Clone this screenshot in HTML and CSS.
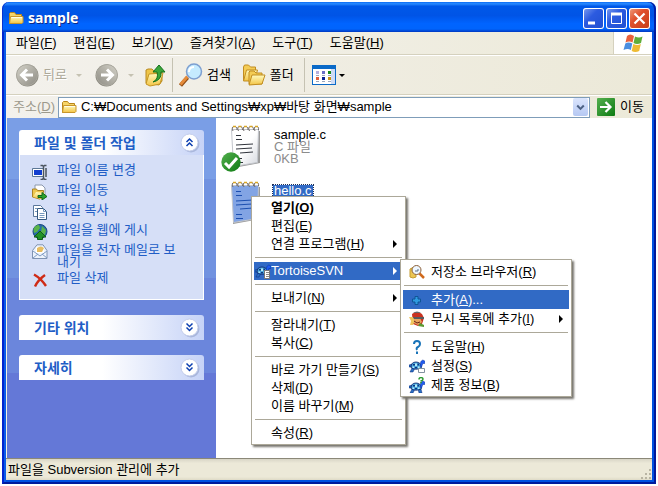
FILE: index.html
```html
<!DOCTYPE html>
<html lang="ko">
<head>
    <title>sample</title>
    <meta charset="UTF-8">
    <meta name="viewport" content="width=device-width, initial-scale=1.0">
    <link rel="stylesheet" href="styles.css">
</head>
<body>

<!-- Shared icon shapes -->
<svg class="sprite" aria-hidden="true">
    <defs>
        <linearGradient id="gFolder" x1="0" y1="0" x2="0" y2="1"><stop offset="0" stop-color="#fffbc0"/><stop offset="1" stop-color="#f3c443"/></linearGradient>
        <linearGradient id="gGray" x1="0" y1="0" x2="1" y2="1"><stop offset="0" stop-color="#d4d2c8"/><stop offset="1" stop-color="#8e8c84"/></linearGradient>
        <linearGradient id="gGreen" x1="0" y1="0" x2="1" y2="1"><stop offset="0" stop-color="#55b04f"/><stop offset="1" stop-color="#0d7a12"/></linearGradient>
        <linearGradient id="gPaper" x1="0" y1="0" x2="1" y2="1"><stop offset="0.5" stop-color="#ffffff"/><stop offset="1" stop-color="#d4d7de"/></linearGradient>
    </defs>
    <symbol id="folder" viewBox="0 0 16 16">
        <path d="M1.5 13.5V3.500l1-1h4l1.500 2h5.500v9z" fill="#f7d567" stroke="#b9861c"/>
        <path d="M1.500 13.500l1-7h12.500v6l-1 1z" fill="url(#gFolder)" stroke="#c8962a"/>
        <path d="M3.500 7.500h10.500" stroke="#fffde8"/>
    </symbol>
    <symbol id="round" viewBox="0 0 24 24">
        <circle cx="12.500" cy="12.500" r="11" fill="#8a887f"/>
        <circle cx="12" cy="12" r="10.500" fill="url(#gGray)" stroke="#aaa89e"/>
        <path d="M18 12H8M12 6.500L6.500 12l5.500 5.500" fill="none" stroke="#fff" stroke-width="3"/>
    </symbol>
    <symbol id="chevron" viewBox="0 0 20 20">
        <path d="M6.500 5.500l3 3 3-3M6.500 9.500l3 3 3-3" fill="none" stroke="#0c3fb0" stroke-width="1.500"/>
    </symbol>
    <symbol id="disc" viewBox="0 0 20 20">
        <circle cx="11" cy="11" r="8.500" fill="#a9b7dc"/>
        <circle cx="9.500" cy="9.500" r="8.500" fill="#fff" stroke="#c3cdeb"/>
    </symbol>
    <symbol id="turtle" viewBox="0 0 16 16">
        <path d="M0 7l3-1v3H0zM1 14l2-4h3l-2 4H1zM9 10h3l1 4h-3z" fill="#2a6fc4" stroke="#0b2a7a" stroke-width=".5"/>
        <path d="M2 9.500Q2 4 7 4t5.500 5.500Q7 13 2 9.500z" fill="#4aa6dc" stroke="#0a1f66" stroke-width=".8"/>
        <path d="M4 6h2v1.500H4zM8.500 5.500h1.500v2H8.500zM6 9h2v1.500H6z" fill="#0c3580"/>
        <path d="M6 5.500h2V8H6zM9 8.500h1.500V10H9zM3.500 8.500H5v1.500H3.500z" fill="#b4ecf8"/>
        <path d="M11 8l.8-4.500 2-1.500 2 1v2.500h-2L12.500 9z" fill="#1f5cf0" stroke="#0a2c9c" stroke-width=".5"/>
    </symbol>
    <symbol id="notepad" viewBox="0 0 32 46">
        <path d="M3 7h27v32l-5 1-22 4z" fill="#9a9a9a"/>
        <path class="sheet" d="M1.500 5.500h27l-1 33-24 4z" stroke="#c3c6cc"/>
        <path d="M3 7Q1 3 4 2.500t3 3.500M8.500 7q-2-4 1-4.500t3 3.500M14 7q-2-4 1-4.500t3 3.500M19.500 7q-2-4 1-4.500t3 3.500M25 7q-2-4 1-4.500t2.500 3.500" fill="none" stroke="#6f6a68"/>
        <path d="M3 2.500h3M8.500 2.500h3M14 2.500h3M19.500 2.500h3M25 2.500h3" stroke="#d9a625" stroke-width="1.500"/>
        <path class="lines" d="M6 11.500h5M6 15.500h6M6 21l17-1M6 25l16-1M10 29l13-1M6 34.500h6M6 38.500h7"/>
    </symbol>
</svg>

<div class="window">
    <header class="titlebar">
        <svg class="icon16"><use href="#folder"/></svg>
        <h1>sample</h1>
        <div class="caption-buttons">
            <button aria-label="최소화"><svg viewBox="0 0 21 21"><path d="M5 15h7" stroke="#fff" stroke-width="3"/></svg></button>
            <button aria-label="최대화"><svg viewBox="0 0 21 21"><path d="M5 5.500h11M5.500 5v10.500h10V5" fill="none" stroke="#fff"/><path d="M5 6h11" stroke="#fff" stroke-width="3"/></svg></button>
            <button class="close" aria-label="닫기"><svg viewBox="0 0 21 21"><path d="M5.500 5.500l10 10M15.500 5.500l-10 10" stroke="#fff" stroke-width="2.200"/></svg></button>
        </div>
    </header>

    <div class="frame">
        <nav class="menubar">
            <button>파일(<u>F</u>)</button>
            <button>편집(<u>E</u>)</button>
            <button>보기(<u>V</u>)</button>
            <button>즐겨찾기(<u>A</u>)</button>
            <button>도구(<u>T</u>)</button>
            <button>도움말(<u>H</u>)</button>
            <div class="flag">
                <svg viewBox="0 0 20 19">
                    <path d="M4 2q3-3 7 0L9.500 8.500q-3-2-7 0z" fill="#e8603c"/>
                    <path d="M12 2.500q4 2 7.500 0L18 9q-4 2-7.500 0z" fill="#5fae3a"/>
                    <path d="M2.300 9.500q3-2 7 0L7.800 16q-3-2-7.300 0z" fill="#4a8ee0"/>
                    <path d="M10.300 10q4 2 7.500 0l-1.600 7q-4 2-7.500 0z" fill="#eebb33"/>
                </svg>
            </div>
        </nav>

        <div class="toolbar">
            <button class="disabled" disabled><svg class="icon24"><use href="#round"/></svg>뒤로</button>
            <span class="caret pale"></span>
            <button class="disabled forward" disabled aria-label="앞으로"><svg class="icon24 flip"><use href="#round"/></svg></button>
            <span class="caret pale"></span>
            <button class="up" aria-label="위로">
                <svg class="icon24" viewBox="0 0 24 24">
                    <path d="M2 20V7l2-1h4l2 2h8v10l-3 4z" fill="#eec548" stroke="#b88a20"/>
                    <path d="M2 21l3-10 14-1-3 11-10 2z" fill="url(#gFolder)" stroke="#c59524"/>
                    <path d="M9 19q6-3 4-10H9l6-7 6 7h-4q1 8-8 10z" fill="#3aa63a" stroke="#14701c"/>
                </svg>
            </button>
            <span class="divider"></span>
            <button class="search">
                <svg class="icon24" viewBox="0 0 24 24">
                    <path d="M1.500 22.500l7-8" stroke="#8d4a12" stroke-width="4"/>
                    <path d="M1.500 21.500l7-8" stroke="#e58b3a" stroke-width="3"/>
                    <circle cx="15" cy="8.500" r="7.500" fill="#c5ebff" stroke="#7d9fd0" stroke-width="1.500"/>
                    <path d="M10 9q0-5 5-5" fill="none" stroke="#fff" stroke-width="2"/>
                </svg>검색
            </button>
            <button class="folders">
                <svg class="icon24" viewBox="0 0 24 24">
                    <path d="M1.500 17V4l1-2h4l2 2h5v4l-4 10z" fill="#f4cc55" stroke="#c18d21"/>
                    <path d="M1.500 18l3-11h11l-3 11z" fill="url(#gFolder)" stroke="#c18d21"/>
                    <path d="M7 21V9l1-1h4l2 2h6v11z" fill="#f4cc55" stroke="#c18d21"/>
                    <path d="M7 22l3-10h13l-3 9z" fill="url(#gFolder)" stroke="#c18d21"/>
                </svg>폴더
            </button>
            <span class="divider"></span>
            <button class="views" aria-label="보기">
                <svg viewBox="0 0 24 20">
                    <path d="M0 0h24v20H0z" fill="#0a6ac8"/><path d="M1 4h22v15H1z" fill="#fff"/>
                    <path d="M19 4h4v15h-4z" fill="#cfdcf5"/>
                    <path d="M4 6h3v3H4z" fill="#b5b0dd"/><path d="M10 6h3v3h-3z" fill="#6a6fc8"/><path d="M16 6h3v3h-3z" fill="#178a22"/>
                    <path d="M4 12h3v3H4z" fill="#e0603c"/><path d="M10 12h3v3h-3z" fill="#0a2494"/><path d="M16 12h3v3h-3z" fill="#c98f17"/>
                    <path d="M4 10.500h3M10 10.500h3M16 10.500h3M4 16.500h3M10 16.500h3M16 16.500h3" stroke="#9aa6bb"/>
                </svg>
            </button>
            <span class="caret"></span>
        </div>

        <form class="addressbar">
            <label for="address">주소(<u>D</u>)</label>
            <div class="combo">
                <svg class="icon16"><use href="#folder"/></svg>
                <input type="text" id="address" value="C:₩Documents and Settings₩xp₩바탕 화면₩sample">
                <button type="button" aria-label="목록"><svg viewBox="0 0 16 18"><path d="M4.500 7.500L8 11l3.500-3.500" fill="none" stroke="#4d6185" stroke-width="2.200"/></svg></button>
            </div>
            <button type="button" class="go">
                <svg viewBox="0 0 18 18"><rect width="18" height="18" rx="1" fill="url(#gGreen)"/><path d="M3 9h10M8.500 4L13.500 9l-5 5" fill="none" stroke="#fff" stroke-width="2.200"/></svg>이동
            </button>
        </form>

        <div class="content">
            <aside class="sidebar">
                <section class="panel">
                    <h2>파일 및 폴더 작업 <button aria-label="접기"><svg viewBox="0 0 20 20"><use href="#disc"/><path d="M6.500 9l3-3 3 3M6.500 13l3-3 3 3" fill="none" stroke="#0c3fb0" stroke-width="1.500"/></svg></button></h2>
                    <ul class="tasks">
                        <li>
                            <svg viewBox="0 0 16 16"><path d="M.5 4.500h11v8H.5z" fill="#fff" stroke="#5c7896"/><path d="M2 6h8v5H2z" fill="#123fd0"/><path d="M8.500 1.500h2l1 1 1-1h2M11.500 3v11M8.500 15.500h2l1-1.500 1 1.500h2M14 4v9" fill="none" stroke="#4b545e" stroke-width="1.500"/><path d="M12.500 4v9" stroke="#c2c8ce"/></svg>
                            <a href="#">파일 이름 변경</a>
                        </li>
                        <li>
                            <svg viewBox="0 0 16 16"><path d="M3 1h7l3 3v7H3z" fill="#fff" stroke="#8c98ac"/><path d="M.5 13V5h4l1 1.500h6V13l-4 2z" fill="#edc74e" stroke="#a98322"/><path d="M1 13l3-5 9 1-3 6z" fill="url(#gFolder)"/><path d="M6 11.500h4V8.500l5 4-5 3.500v-2.500H6z" fill="#2da32d" stroke="#10661a"/></svg>
                            <a href="#">파일 이동</a>
                        </li>
                        <li>
                            <svg viewBox="0 0 16 16"><path d="M1.500 1.500h7l2 2v9h-9z" fill="#fff" stroke="#5b779b"/><path d="M5.500 4.500h6l3 3v8h-9z" fill="#fff" stroke="#35587f"/><path d="M11.500 4.500v3h3M7.500 9.500h5M7.500 11.500h5M7.500 13.500h5M3 4.500h2M3 7.500h2" fill="none" stroke="#7799bd"/></svg>
                            <a href="#">파일 복사</a>
                        </li>
                        <li>
                            <svg viewBox="0 0 16 16"><circle cx="8" cy="7.500" r="7" fill="#276ca9" stroke="#1b477f"/><path d="M1.500 5Q3 1 7 1l1 3-3 4-3 1zM10 2l4 4-1 5-4-3z" fill="#5ab449"/><path d="M2 13l6-6 6 6h-3.500v2.500h-5V13z" fill="#229226" stroke="#0e5c18"/></svg>
                            <a href="#">파일을 웹에 게시</a>
                        </li>
                        <li>
                            <svg viewBox="0 0 16 16"><path d="M.5 6.500L5 .8h6l4 5.700v8H.5z" fill="#edf3fc" stroke="#7f93b2"/><path d="M4 3h8v6H4z" fill="#fff"/><path d="M5 4q4-3 7 0l-2 4H5z" fill="#e7bd62"/><path d="M1 7l7 5 7-5M1 14l5-4M15 14l-5-4" fill="none" stroke="#7f9bc2"/></svg>
                            <a href="#">파일을 전자 메일로 보내기</a>
                        </li>
                        <li>
                            <svg viewBox="0 0 16 16"><path d="M2 2.500q7 4 12 11.500M13 3Q6 8 3 14.500" fill="none" stroke="#cf2b16" stroke-width="2.400"/></svg>
                            <a href="#">파일 삭제</a>
                        </li>
                    </ul>
                </section>
                <section class="panel">
                    <h2>기타 위치 <button aria-label="펼치기"><svg viewBox="0 0 20 20"><use href="#disc"/><use href="#chevron"/></svg></button></h2>
                </section>
                <section class="panel">
                    <h2>자세히 <button aria-label="펼치기"><svg viewBox="0 0 20 20"><use href="#disc"/><use href="#chevron"/></svg></button></h2>
                </section>
            </aside>

            <main class="files">
                <div class="file">
                    <div class="file-icon">
                        <svg class="page"><use href="#notepad"/></svg>
                        <svg class="overlay" viewBox="0 0 20 20"><circle cx="10" cy="10" r="9.700" fill="url(#gGreen)"/><path d="M4 11l4 4 8-9" fill="none" stroke="#fff" stroke-width="3"/></svg>
                    </div>
                    <div class="file-text">
                        <span class="name">sample.c</span>
                        <span>C 파일</span>
                        <span>0KB</span>
                    </div>
                </div>

                <div class="file selected">
                    <div class="file-icon"><svg class="page"><use href="#notepad"/></svg></div>
                    <div class="file-text">
                        <span class="name">hello.c</span>
                    </div>

                    <ul class="menu context" role="menu">
                        <li><button class="default">열기(<u>O</u>)</button></li>
                        <li><button>편집(<u>E</u>)</button></li>
                        <li><button class="more">연결 프로그램(<u>H</u>)</button></li>
                        <li class="line"></li>
                        <li class="active">
                            <button class="more">
                                <svg viewBox="0 0 16 16"><use href="#turtle"/><path d="M9.500 7.500h5v8h-5z" fill="#fff" stroke="#777"/><path d="M11 9.500h3M11 11.500h3M11 13.500h3" stroke="#888"/></svg>TortoiseSVN
                            </button>
                            <ul class="menu sub" role="menu">
                                <li><button>
                                    <svg viewBox="0 0 16 16"><path d="M1 5q3-3 6 0v8q-3 2-6 0z" fill="#ecc653" stroke="#c59c32"/><path d="M10 9l5 5" stroke="#d06a1d" stroke-width="2.500"/><circle cx="7.500" cy="6" r="4.500" fill="#eef7ff" stroke="#8b5e37"/><path d="M6 7h3V5" fill="none" stroke="#5c7187"/></svg>저장소 브라우저(<u>R</u>)
                                </button></li>
                                <li class="line"></li>
                                <li class="active"><button>
                                    <svg viewBox="0 0 16 16"><path d="M6 4.500h3V7h2.500v3H9v2.500H6V10H3.500V7H6z" fill="#2f9ae0" stroke="#0e5596"/></svg>추가(<u>A</u>)...
                                </button></li>
                                <li><button class="more">
                                    <svg viewBox="0 0 16 16"><path d="M3 3q5-4 10 0l2 4-2 6-4 2-5-2z" fill="#c93220"/><path d="M0 6h4l2 3-2 5H1l1-4z" fill="#efc65e"/><path d="M5 8l6-1 2 4-4 3-4-2z" fill="#e9a35d"/><path d="M4 2q4-3 8 0z" fill="#62686c"/><path d="M4 6h11v2H5z" fill="#555c60"/><path d="M5 10l3 2 3-1" stroke="#672218" fill="none"/><path d="M9 15l2-3 4 2v2z" fill="#5b9930"/></svg>무시 목록에 추가(<u>I</u>)
                                </button></li>
                                <li class="line"></li>
                                <li><button>
                                    <svg viewBox="0 0 16 16"><path d="M5 5q0-3 3-3t3 3q0 2-2 3t-1 3M8 12.500v2.500" fill="none" stroke="#1873b8" stroke-width="2"/></svg>도움말(<u>H</u>)
                                </button></li>
                                <li><button>
                                    <svg viewBox="0 0 16 16"><use href="#turtle"/><path d="M9.500 10.500h6v4h-6z" fill="#fff" stroke="#8291a0"/></svg>설정(<u>S</u>)
                                </button></li>
                                <li><button>
                                    <svg viewBox="0 0 16 16"><use href="#turtle" y="2"/><path d="M10 2.500Q10 .6 12 .6t2 1.400-2 2v.5M12 5v1.200" fill="none" stroke="#2c9b30" stroke-width="1.500"/></svg>제품 정보(<u>B</u>)
                                </button></li>
                            </ul>
                        </li>
                        <li class="line"></li>
                        <li><button class="more">보내기(<u>N</u>)</button></li>
                        <li class="line"></li>
                        <li><button>잘라내기(<u>T</u>)</button></li>
                        <li><button>복사(<u>C</u>)</button></li>
                        <li class="line"></li>
                        <li><button>바로 가기 만들기(<u>S</u>)</button></li>
                        <li><button>삭제(<u>D</u>)</button></li>
                        <li><button>이름 바꾸기(<u>M</u>)</button></li>
                        <li class="line"></li>
                        <li><button>속성(<u>R</u>)</button></li>
                    </ul>
                </div>
            </main>
        </div>

        <footer class="statusbar">
            <span>파일을 Subversion 관리에 추가</span>
            <svg viewBox="0 0 12 12"><path d="M9 1h2v2H9zM5 5h2v2H5zM9 5h2v2H9zM1 9h2v2H1zM5 9h2v2H5zM9 9h2v2H9z" fill="#b8b4a3"/></svg>
        </footer>
    </div>
</div>

</body>
</html>
```
FILE: styles.css
```css
/* Global styles */
* {
    box-sizing: border-box;
}

body {
    background-color: #ffffff;
    color: #000000;
    font-family: "Liberation Sans", "Noto Sans CJK KR", sans-serif;
    font-size: 13px;
    line-height: 18px;
    margin: 0;
    padding: 2px;
}

button {
    display: flex;
    align-items: center;
    background: none;
    border: 0;
    padding: 0;
    color: inherit;
    font: inherit;
    white-space: nowrap;
}

svg {
    display: block;
    flex: none;
}

ul {
    list-style: none;
    margin: 0;
    padding: 0;
}

u {
    text-underline-offset: 1px;
}

.sprite {
    position: absolute;
    width: 0;
    height: 0;
}

.icon16 {
    width: 16px;
    height: 16px;
}

.icon24 {
    width: 24px;
    height: 24px;
}

.flip {
    transform: scaleX(-1);
}

/* Window */
.window {
    display: flex;
    flex-direction: column;
    min-height: calc(100vh - 4px);
}

.titlebar {
    display: flex;
    align-items: center;
    gap: 4px;
    height: 30px;
    padding: 2px 6px 0;
    border-radius: 7px 7px 0 0;
    background: linear-gradient(#0a6cf5, #2a8bff 6%, #0058e8 14%, #0054e6 45%, #0064ff 72%, #0064fc 90%, #0038c0);
    box-shadow: inset 1px 0 #0a32d0, inset -2px 0 #0020a8;
}

.titlebar h1 {
    flex: 1;
    margin: 0;
    color: #ffffff;
    font-family: "Noto Sans", sans-serif;
    font-size: 14px;
    line-height: 20px;
    text-shadow: 1px 1px #0a2a88;
}

.caption-buttons {
    display: flex;
    gap: 2px;
}

.caption-buttons button {
    width: 21px;
    height: 21px;
    border-radius: 3px;
    background: linear-gradient(135deg, #7f9ff0, #2c5be0 40%, #1f4fd0);
    box-shadow: inset 0 0 0 1px #ffffff;
}

.caption-buttons .close {
    background: linear-gradient(135deg, #f0a080, #e0502c 40%, #c43c16);
}

.caption-buttons svg {
    width: 21px;
    height: 21px;
}

.frame {
    display: flex;
    flex: 1;
    flex-direction: column;
    border: 2px solid #001a9c;
    border-top: 0;
    border-left-color: #0024cf;
    background-color: #ece9d8;
    box-shadow: inset 2px 0 #0a5ce8, inset -2px -2px #0050e0;
    padding: 0 2px 2px;
}

/* Menu bar, toolbar and address bar */
.menubar {
    display: flex;
    gap: 1px;
    height: 23px;
    padding-left: 2px;
    background: linear-gradient(to right, #f5f4f0, #ece9d8);
    border-bottom: 1px solid #d5d1be;
}

.menubar button {
    padding: 0 8px;
}

.flag {
    display: flex;
    align-items: center;
    justify-content: center;
    width: 39px;
    margin-left: auto;
    border-left: 1px solid #d5d1be;
    background-color: #ffffff;
}

.flag svg {
    width: 20px;
    height: 19px;
}

.toolbar {
    display: flex;
    align-items: center;
    height: 40px;
    padding-left: 9px;
    border-top: 1px solid #ffffff;
    border-bottom: 1px solid #d5d1be;
    background: linear-gradient(to right, #f3f1ec, #ece9d8);
}

.toolbar button {
    gap: 4px;
}

.toolbar .disabled {
    color: #aca899;
    text-shadow: 1px 1px #ffffff;
}

.toolbar .forward {
    margin-left: 13px;
}

.toolbar .up {
    margin-left: 10px;
}

.toolbar .folders {
    margin-left: 11px;
}

.toolbar .views {
    margin-right: 3px;
}

.views svg {
    width: 24px;
    height: 20px;
}

.divider {
    width: 1px;
    height: 34px;
    margin: 0 6px 0 4px;
    background-color: #c5c2b2;
}

.folders + .divider {
    margin: 0 7px 0 10px;
}

.caret {
    border: 3px solid transparent;
    border-top-color: #000000;
    border-bottom: 0;
}

.caret.pale {
    margin-left: 9px;
    border-top-color: #c5c2b2;
}

.addressbar {
    display: flex;
    align-items: center;
    height: 23px;
    padding: 0 8px 0 7px;
    border-top: 1px solid #ffffff;
    background: linear-gradient(to right, #f3f1ec, #ece9d8);
}

.addressbar label {
    margin-right: 3px;
    color: #9c998b;
}

.combo {
    display: flex;
    flex: 1;
    align-items: center;
    gap: 4px;
    min-width: 0;
    height: 21px;
    padding: 0 1px 0 2px;
    border: 1px solid #7f9db9;
    background-color: #ffffff;
}

.combo input {
    flex: 1;
    min-width: 0;
    border: 0;
    padding: 0;
    background: none;
    color: #000000;
    font: inherit;
    outline: none;
}

.combo button {
    width: 15px;
    height: 18px;
    border-radius: 2px;
    background: linear-gradient(#dbe5fd, #b5c8f3);
}

.combo button svg {
    width: 15px;
    height: 18px;
}

.go {
    gap: 5px;
    margin-left: 7px;
}

.go svg {
    width: 18px;
    height: 18px;
}

/* Task pane */
.content {
    display: flex;
    flex: 1;
    min-height: 340px;
}

.sidebar {
    flex: none;
    width: 210px;
    padding: 12px;
    border-left: 1px solid #f3f1e4;
    background: linear-gradient(#7a9ee6 18%, #7192e0 18%, #7192e0 47%, #6b86dc 47%, #6b86dc 75%, #6478d7 75%);
}

.panel {
    margin-bottom: 15px;
}

.panel h2 {
    display: flex;
    align-items: center;
    justify-content: space-between;
    height: 25px;
    margin: 0;
    padding: 0 4px 0 15px;
    border-radius: 3px 3px 0 0;
    background: linear-gradient(to right, #ffffff 45%, #c6d3f7);
    color: #215dc6;
    font-size: 14px;
    line-height: 18px;
}

.panel h2 svg {
    width: 20px;
    height: 20px;
}

.tasks {
    display: flex;
    flex-direction: column;
    gap: 4px;
    padding: 9px 24px 11px 12px;
    border: 1px solid #ffffff;
    border-top: 0;
    background-color: #d6dff7;
    line-height: 12px;
}

.tasks li {
    display: flex;
    gap: 9px;
}

.tasks svg {
    width: 16px;
    height: 16px;
}

.tasks a {
    color: #215dc6;
    text-decoration: none;
    word-break: break-all;
}

/* File list */
.files {
    flex: 1;
    min-width: 0;
    padding: 6px 14px;
    background-color: #ffffff;
}

.file {
    position: relative;
    display: flex;
    gap: 11px;
    height: 56px;
}

.file-icon {
    position: relative;
}

.page {
    width: 32px;
    height: 46px;
}

.sheet {
    fill: var(--sheet, url(#gPaper));
}

.lines {
    stroke: var(--ink, #30343c);
}

.overlay {
    position: absolute;
    left: -9px;
    bottom: 8px;
    width: 20px;
    height: 20px;
}

.file-text {
    display: flex;
    flex-direction: column;
    align-items: flex-start;
    padding-top: 5px;
    color: #8c8c8c;
    line-height: 12px;
}

.file-text span {
    padding: 0 1px;
}

.file-text .name {
    color: #000000;
}

.selected .page {
    --sheet: #82a4e4;
    --ink: #1c4fb0;
}

.selected .name {
    background-color: #316ac5;
    color: #ffffff;
    outline: 1px dotted #1c2f58;
}

/* Popup menus */
.menu {
    position: absolute;
    z-index: 1;
    padding: 2px;
    border: 1px solid #aca899;
    background-color: #ffffff;
    box-shadow: 2px 2px 2px #77756e;
    line-height: 18px;
}

.context {
    top: 16px;
    left: 21px;
    width: 155px;
}

.menu li {
    position: relative;
}

.menu button {
    position: relative;
    width: 100%;
    height: 18px;
    padding-left: 17px;
}

.menu .default {
    font-weight: bold;
}

.menu svg {
    width: 16px;
    height: 16px;
    margin-left: -16px;
}

.menu .active > button {
    background-color: #316ac5;
    color: #ffffff;
}

.menu .line {
    height: 9px;
    padding: 4px 1px;
}

.menu .line::before {
    content: "";
    display: block;
    height: 1px;
    background-color: #aca899;
}

.more::after {
    content: "";
    margin: 0 6px 0 auto;
    border: 4px solid transparent;
    border-left-color: currentColor;
    border-right: 0;
}

.sub {
    top: -3px;
    left: calc(100% - 3px);
    width: 172px;
    color: #000000;
}

.sub button {
    height: 19px;
    padding-left: 28px;
}

.sub svg {
    margin-left: -22px;
    margin-right: 6px;
}

/* Status bar */
.statusbar {
    display: flex;
    align-items: center;
    justify-content: space-between;
    height: 22px;
    padding-left: 2px;
    border-top: 1px solid #8b8878;
    background: linear-gradient(#d8d5c6, #ece9d8 20%, #ece9d8 85%, #dedac6);
}

.statusbar svg {
    align-self: flex-end;
    width: 12px;
    height: 12px;
}
```
